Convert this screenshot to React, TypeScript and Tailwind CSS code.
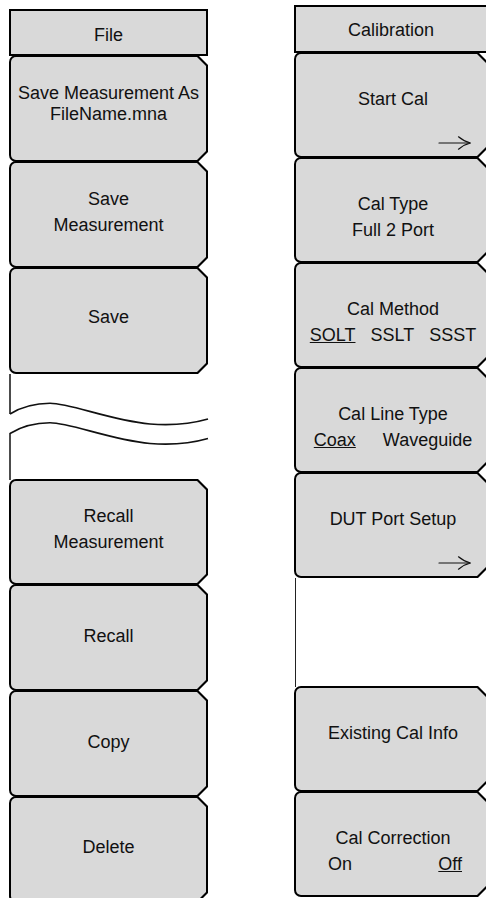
import React from "react";

const OUTER =
  "-mt-px shrink-0 bg-black rounded-l-[7px] p-[2px] [clip-path:polygon(0_0,calc(100%_-_10px)_0,100%_10px,100%_calc(100%_-_10px),calc(100%_-_10px)_100%,0_100%)]";
const INNER =
  "h-full bg-[#d9d9d9] rounded-l-[5px] [clip-path:polygon(0_0,calc(100%_-_9px)_0,100%_9px,100%_calc(100%_-_9px),calc(100%_-_9px)_100%,0_100%)]";

function Arrow() {
  return (
    <svg width="34" height="14" viewBox="0 0 34 14" fill="none" stroke="#111" strokeWidth="1.2" strokeLinecap="round">
      <path d="M1 7H32" />
      <path d="M20.5 0.8Q26 5.5 32.5 7Q26 8.5 20.5 13.2" />
    </svg>
  );
}

function LeftKey({ h, lines, leading, pb }: { h: string; lines: string[]; leading: string; pb: string }) {
  return (
    <div className={`${OUTER} ${h}`}>
      <div className={`${INNER} flex flex-col items-center justify-center text-center ${pb} ${leading}`}>
        {lines.map((l) => (
          <div key={l} className="whitespace-nowrap">
            {l}
          </div>
        ))}
      </div>
    </div>
  );
}

function RightKey({ title, second, arrow }: { title: string; second?: React.ReactNode; arrow?: boolean }) {
  return (
    <div className={`${OUTER} h-[106px]`}>
      <div className={`${INNER} flex flex-col pt-[32px] leading-[26px]`}>
        <div className="pl-[4px] text-center whitespace-nowrap">{title}</div>
        {second}
        <div className="flex-1" />
        {arrow && (
          <div className="flex justify-end pr-[14px] pb-[6px]">
            <Arrow />
          </div>
        )}
      </div>
    </div>
  );
}

function Header({ label, h, pt }: { label: string; h: string; pt: string }) {
  return (
    <div className={`shrink-0 border-2 border-black bg-[#d9d9d9] flex items-center justify-center ${h} ${pt}`}>
      {label}
    </div>
  );
}

function BreakMark() {
  return (
    <div className="h-[106px] shrink-0">
      <svg width="200" height="106" viewBox="0 0 200 106" fill="none" stroke="#111" className="overflow-visible">
        <path d="M1 0V40" strokeWidth="1.5" />
        <path d="M1 59V106" strokeWidth="1.5" />
        <path d="M1 40C14 32 28 29.3 41 29.3C62 29.3 100 46 141 50C165 52 185 49 199 45" strokeWidth="1.6" />
        <path d="M1 59.5C14 51.5 28 48.8 41 48.8C62 48.8 100 65.5 141 69.5C165 71.5 185 68.5 199 64.5" strokeWidth="1.6" />
      </svg>
    </div>
  );
}

export default function App() {
  return (
    <div className="w-[486px] h-[898px] overflow-hidden bg-white flex font-['Liberation_Sans',Arial,sans-serif] text-[18px] text-[#111]">
      <div className="ml-[9px] w-[199px] shrink-0 pt-[9px] flex flex-col">
        <Header label="File" h="h-[47px]" pt="pt-[5px]" />
        <LeftKey h="h-[107px]" lines={["Save Measurement As", "FileName.mna"]} leading="leading-[21px]" pb="pb-[9px]" />
        <LeftKey h="h-[107px]" lines={["Save", "Measurement"]} leading="leading-[26px]" pb="pb-[5px]" />
        <LeftKey h="h-[107px]" lines={["Save"]} leading="leading-[26px]" pb="pb-[8px]" />
        <BreakMark />
        <LeftKey h="h-[106px]" lines={["Recall", "Measurement"]} leading="leading-[26px]" pb="pb-[6px]" />
        <LeftKey h="h-[107px]" lines={["Recall"]} leading="leading-[26px]" pb="pb-[3px]" />
        <LeftKey h="h-[107px]" lines={["Copy"]} leading="leading-[26px]" pb="pb-[4px]" />
        <LeftKey h="h-[107px]" lines={["Delete"]} leading="leading-[26px]" pb="pb-[5px]" />
      </div>

      <div className="ml-[86px] w-[194px] shrink-0 pt-[5px] flex flex-col">
        <Header label="Calibration" h="h-[48px]" pt="pt-[2px]" />
        <RightKey title="Start Cal" arrow />
        <RightKey title="Cal Type" second={<div className="pl-[4px] text-center whitespace-nowrap">Full 2 Port</div>} />
        <RightKey
          title="Cal Method"
          second={
            <div className="pl-[4px] flex justify-center gap-[15px] whitespace-nowrap">
              <span className="underline">SOLT</span>
              <span>SSLT</span>
              <span>SSST</span>
            </div>
          }
        />
        <RightKey
          title="Cal Line Type"
          second={
            <div className="pl-[4px] flex justify-center gap-[27px] whitespace-nowrap">
              <span className="underline">Coax</span>
              <span>Waveguide</span>
            </div>
          }
        />
        <RightKey title="DUT Port Setup" arrow />
        <div className="h-[109px] shrink-0 ml-px border-l border-[#222]" />
        <RightKey title="Existing Cal Info" />
        <RightKey
          title="Cal Correction"
          second={
            <div className="pl-[8px] flex justify-center whitespace-nowrap">
              <div className="w-[134px] flex justify-between">
                <span>On</span>
                <span className="underline">Off</span>
              </div>
            </div>
          }
        />
      </div>
    </div>
  );
}
